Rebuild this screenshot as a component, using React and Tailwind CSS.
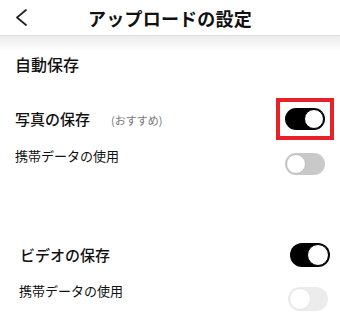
const font = { fontFamily: '"Noto Sans CJK JP", "Noto Sans", sans-serif' }

function Toggle({ on, tone = 'mid', h = 22 }) {
  if (on) {
    return (
      <div className={`flex items-center justify-end rounded-full bg-black w-[40px] ${h === 24 ? 'h-[24px]' : 'h-[22px]'} p-[1px]`}>
        <div className={`rounded-full bg-white border-[1.5px] border-black ${h === 24 ? 'w-[22px] h-[22px]' : 'w-[20px] h-[20px]'}`} />
      </div>
    )
  }
  const track = tone === 'light' ? 'bg-[#ececec]' : 'bg-[#c9c9c9]'
  const ring = tone === 'light' ? 'border-[#e6e6e6]' : 'border-[#bdbdbd]'
  return (
    <div className={`flex items-center justify-start rounded-full ${track} w-[40px] ${h === 24 ? 'h-[24px]' : 'h-[22px]'} p-[1px]`}>
      <div className={`rounded-full bg-white border ${ring} ${h === 24 ? 'w-[22px] h-[22px]' : 'w-[20px] h-[20px]'}`} />
    </div>
  )
}

export default function App() {
  return (
    <div className="w-[340px] h-[316px] overflow-hidden bg-white text-[#111]" style={font}>
      {/* header */}
      <div className="grid grid-cols-[40px_1fr_40px] items-center h-[36px] border-b border-[#dcdcdc]">
        <div className="pl-[15px] flex items-center">
          <svg width="13" height="17" viewBox="0 0 13 17" fill="none" stroke="#222" strokeWidth="1.7" strokeLinecap="round" strokeLinejoin="round">
            <polyline points="11,1 2,8.5 11,16" />
          </svg>
        </div>
        <div className="text-center text-[18px] font-bold leading-none tracking-[0.2px]">アップロードの設定</div>
        <div />
      </div>
      <div className="h-[15px] bg-gradient-to-b from-[#ececec] to-white" />

      {/* 自動保存 */}
      <div className="px-[15px] mt-[1px] text-[16px] leading-[24px] font-medium">自動保存</div>

      <div className="flex items-center justify-between mt-[22px] h-[42px]">
        <div className="flex items-center pl-[15px]">
          <span className="text-[15px] font-medium leading-[20px]">写真の保存</span>
          <span className="ml-[21px] text-[11px] text-[#777] leading-[20px] mt-[2px]">(おすすめ)</span>
        </div>
        <div className="mr-[6px] w-[58px] h-[42px] border-4 border-[#e8202a] flex items-center justify-center">
          <Toggle on />
        </div>
      </div>

      <div className="flex items-start justify-between mt-[6px]">
        <span className="pl-[15px] text-[13px] leading-[20px]">携帯データの使用</span>
        <div className="mt-[7px] mr-[15px]">
          <Toggle />
        </div>
      </div>

      {/* ビデオ */}
      <div className="flex items-center justify-between mt-[68px] h-[24px] pl-[20px] pr-[10px]">
        <span className="text-[15px] font-medium leading-[20px]">ビデオの保存</span>
        <Toggle on h={24} />
      </div>

      <div className="flex items-start justify-between mt-[14px] pl-[19px] pr-[12px]">
        <span className="text-[13px] leading-[20px]">携帯データの使用</span>
        <div className="mt-[6px]">
          <Toggle tone="light" h={24} />
        </div>
      </div>
    </div>
  )
}
